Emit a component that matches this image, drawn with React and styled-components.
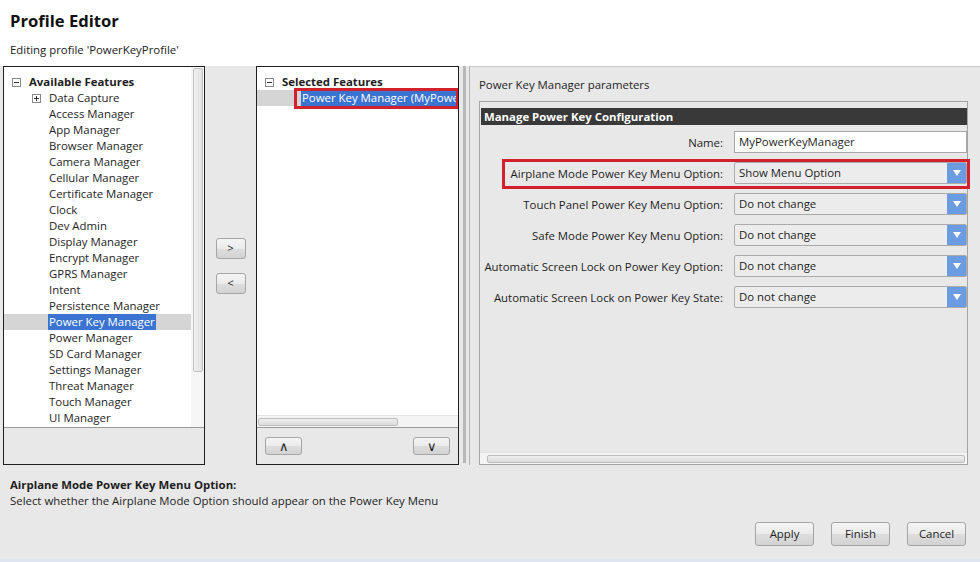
import React from 'react'
import styled, { createGlobalStyle } from 'styled-components'

const FONT = `"Open Sans", "Noto Sans", sans-serif`

const GlobalStyle = createGlobalStyle`
  * { box-sizing: border-box; }
  body {
    margin: 0;
    font-family: ${FONT};
    font-size: 11.4px;
    color: #1e1e1e;
    background: #e8e8e8;
  }
`

const Window = styled.div`
  width: 980px;
  height: 562px;
  display: flex;
  flex-direction: column;
  background: #e8e8e8;
  border-bottom: 3px solid #dde6f1;
  overflow: hidden;
`

const Header = styled.div`
  height: 66px;
  background: #fff;
  padding: 10px 10px 0;
  display: flex;
  flex-direction: column;
`

const Title = styled.div`
  font-size: 16.6px;
  font-weight: bold;
  color: #111;
  line-height: 22px;
`

const Subtitle = styled.div`
  margin-top: 10px;
  line-height: 16px;
  color: #222;
`

const Body = styled.div`
  height: 399px;
  display: flex;
  padding-left: 3px;
`

const FeaturePanel = styled.div`
  width: ${p => p.$width}px;
  height: 399px;
  border: 1px solid #1f1f1f;
  display: flex;
  flex-direction: column;
  background: #e8e8e8;
`

const TreeArea = styled.div`
  height: 361px;
  background: #fff;
  border-bottom: 1px solid #9a9a9a;
  display: flex;
  flex-direction: ${p => (p.$horizontal ? 'column' : 'row')};
`

const TreeList = styled.div`
  flex: 1;
  padding-top: 7px;
  overflow: hidden;
`

const Row = styled.div`
  position: relative;
  height: 16px;
  line-height: 16px;
  display: flex;
  align-items: center;
  white-space: nowrap;
  padding-left: ${p => p.$indent}px;
  background: ${p => (p.$active ? '#d5d5d5' : 'transparent')};
`

const Expander = styled.span`
  width: 9px;
  height: 9px;
  border: 1px solid #8a8a8a;
  position: relative;
  margin-right: 8px;
  flex-shrink: 0;
  background: #fff;
  &::before {
    content: '';
    position: absolute;
    left: 1px;
    right: 1px;
    top: 3px;
    height: 1px;
    background: #333;
  }
  &::after {
    content: '';
    display: ${p => (p.$open ? 'none' : 'block')};
    position: absolute;
    top: 1px;
    bottom: 1px;
    left: 3px;
    width: 1px;
    background: #333;
  }
`

const Label = styled.span`
  font-weight: ${p => (p.$bold ? 'bold' : 'normal')};
  color: ${p => (p.$selected ? '#fff' : '#1e1e1e')};
  background: ${p => (p.$selected ? '#3a73d0' : 'transparent')};
  padding: 0 1px;
  margin-left: -1px;
`

const VScroll = styled.div`
  width: 13px;
  padding: 1px 1px 0 2px;
  background: #f6f6f6;
`

const VThumb = styled.div`
  height: 304px;
  border: 1px solid #c2c2c2;
  border-radius: 2px;
  background: linear-gradient(to right, #f0f0f0, #e2e2e2);
`

const HScroll = styled.div`
  height: 12px;
  padding: 2px 0 1px ${p => p.$inset}px;
  background: #f4f4f4;
  border-top: 1px solid #e4e4e4;
`

const HThumb = styled.div`
  width: ${p => p.$width}px;
  height: 100%;
  border: 1px solid #bdbdbd;
  border-radius: 2px;
  background: linear-gradient(#eeeeee, #dcdcdc);
`

const PanelFooter = styled.div`
  flex: 1;
  display: flex;
  align-items: center;
  justify-content: space-between;
  padding: 0 8px;
`

const Button = styled.button`
  font-family: ${FONT};
  font-size: ${p => p.$fs || 11.4}px;
  color: #1e1e1e;
  width: ${p => p.$w}px;
  height: ${p => p.$h}px;
  padding: 0;
  border: 1px solid #a5a5a5;
  border-radius: 3px;
  background: linear-gradient(#f4f4f4 0%, #ebebeb 50%, #dddddd 51%, #d3d3d3 100%);
  line-height: 1;
`

const MoveColumn = styled.div`
  width: 51px;
  display: flex;
  flex-direction: column;
  align-items: center;
  justify-content: center;
  gap: 14px;
`

const Sash = styled.div`
  width: 10px;
  padding: 0 3px 2px 4px;
  display: flex;
`

const Dots = styled.div`
  flex: 1;
  background-image: radial-gradient(circle, #9c9c9c 0.6px, transparent 0.9px);
  background-size: 2px 2px;
`

const ParamPanel = styled.div`
  flex: 1;
  border-left: 1px solid #b4b4b4;
  border-top: 1px solid #c8c8c8;
  padding: 10px 12px 0 9px;
  display: flex;
  flex-direction: column;
`

const PanelCaption = styled.div`
  line-height: 16px;
  margin-bottom: 8px;
`

const Group = styled.div`
  width: 489px;
  height: 364px;
  border: 1px solid #a4a4a4;
  padding-top: 6px;
  display: flex;
  flex-direction: column;
`

const GroupTitle = styled.div`
  margin: 0 0 0 1px;
  height: 17px;
  line-height: 17px;
  padding-left: 3px;
  background: #393939;
  color: #fff;
  font-weight: bold;
`

const Fields = styled.div`
  flex: 1;
  display: flex;
  flex-direction: column;
  gap: 9px;
  padding: 6px 0 0 1px;
`

const FieldRow = styled.div`
  position: relative;
  display: flex;
  align-items: center;
  gap: 11px;
  height: 22px;
`

const FieldLabel = styled.div`
  flex: 1;
  text-align: right;
  white-space: nowrap;
`

const TextBox = styled.div`
  width: 233px;
  height: 22px;
  border: 1px solid #a8a8a8;
  background: #fff;
  padding-left: 4px;
  line-height: 20px;
`

const Select = styled.div`
  width: 233px;
  height: 22px;
  border: 1px solid #aaaaaa;
  border-radius: 2px;
  background: #ececec;
  display: flex;
`

const SelectValue = styled.div`
  flex: 1;
  padding-left: 4px;
  line-height: 20px;
`

const SelectArrow = styled.div`
  width: 19px;
  background: #6b9be0;
  display: flex;
  align-items: center;
  justify-content: center;
  &::after {
    content: '';
    border-left: 4px solid transparent;
    border-right: 4px solid transparent;
    border-top: 6px solid #fff;
  }
`

const Highlight = styled.div`
  position: absolute;
  border: 3px solid #d2202d;
  pointer-events: none;
  left: ${p => p.$l}px;
  top: ${p => p.$t}px;
  right: ${p => p.$r}px;
  bottom: ${p => p.$b}px;
`

const Footer = styled.div`
  flex: 1;
  display: flex;
  flex-direction: column;
  padding: 12px 14px 13px 10px;
`

const HelpTitle = styled.div`
  font-weight: bold;
  line-height: 16px;
`

const HelpText = styled.div`
  line-height: 16px;
`

const ActionRow = styled.div`
  margin-top: auto;
  display: flex;
  justify-content: flex-end;
  gap: 17px;
`

const features = [
  'Access Manager', 'App Manager', 'Browser Manager', 'Camera Manager', 'Cellular Manager',
  'Certificate Manager', 'Clock', 'Dev Admin', 'Display Manager', 'Encrypt Manager',
  'GPRS Manager', 'Intent', 'Persistence Manager', 'Power Key Manager', 'Power Manager',
  'SD Card Manager', 'Settings Manager', 'Threat Manager', 'Touch Manager', 'UI Manager',
]

const params = [
  { label: 'Airplane Mode Power Key Menu Option:', value: 'Show Menu Option', marked: true },
  { label: 'Touch Panel Power Key Menu Option:', value: 'Do not change' },
  { label: 'Safe Mode Power Key Menu Option:', value: 'Do not change' },
  { label: 'Automatic Screen Lock on Power Key Option:', value: 'Do not change' },
  { label: 'Automatic Screen Lock on Power Key State:', value: 'Do not change' },
]

export default function App() {
  return (
    <>
      <GlobalStyle />
      <Window>
        <Header>
          <Title>Profile Editor</Title>
          <Subtitle>Editing profile 'PowerKeyProfile'</Subtitle>
        </Header>

        <Body>
          <FeaturePanel $width={202}>
            <TreeArea>
              <TreeList>
                <Row $indent={8}>
                  <Expander $open />
                  <Label $bold>Available Features</Label>
                </Row>
                <Row $indent={28}>
                  <Expander />
                  <Label>Data Capture</Label>
                </Row>
                {features.map(name => (
                  <Row key={name} $indent={45} $active={name === 'Power Key Manager'}>
                    <Label $selected={name === 'Power Key Manager'}>{name}</Label>
                  </Row>
                ))}
              </TreeList>
              <VScroll>
                <VThumb />
              </VScroll>
            </TreeArea>
            <PanelFooter />
          </FeaturePanel>

          <MoveColumn>
            <Button $w={30} $h={21}>&gt;</Button>
            <Button $w={30} $h={21}>&lt;</Button>
          </MoveColumn>

          <FeaturePanel $width={203}>
            <TreeArea $horizontal>
              <TreeList>
                <Row $indent={8}>
                  <Expander $open />
                  <Label $bold>Selected Features</Label>
                </Row>
                <Row $indent={45} $active>
                  <Label $selected>Power Key Manager (MyPowerKeyManager)</Label>
                  <Highlight $l={37} $t={-2} $r={-1} $b={-3} />
                </Row>
              </TreeList>
              <HScroll $inset={1}>
                <HThumb $width={140} />
              </HScroll>
            </TreeArea>
            <PanelFooter>
              <Button $w={37} $h={18} $fs={13}>∧</Button>
              <Button $w={37} $h={18} $fs={13}>∨</Button>
            </PanelFooter>
          </FeaturePanel>

          <Sash>
            <Dots />
          </Sash>

          <ParamPanel>
            <PanelCaption>Power Key Manager parameters</PanelCaption>
            <Group>
              <GroupTitle>Manage Power Key Configuration</GroupTitle>
              <Fields>
                <FieldRow>
                  <FieldLabel>Name:</FieldLabel>
                  <TextBox>MyPowerKeyManager</TextBox>
                </FieldRow>
                {params.map(p => (
                  <FieldRow key={p.label}>
                    <FieldLabel>{p.label}</FieldLabel>
                    <Select>
                      <SelectValue>{p.value}</SelectValue>
                      <SelectArrow />
                    </Select>
                    {p.marked && <Highlight $l={21} $t={-3} $r={-3} $b={-5} />}
                  </FieldRow>
                ))}
              </Fields>
              <HScroll $inset={7}>
                <HThumb $width={478} />
              </HScroll>
            </Group>
          </ParamPanel>
        </Body>

        <Footer>
          <HelpTitle>Airplane Mode Power Key Menu Option:</HelpTitle>
          <HelpText>Select whether the Airplane Mode Option should appear on the Power Key Menu</HelpText>
          <ActionRow>
            <Button $w={59} $h={24}>Apply</Button>
            <Button $w={59} $h={24}>Finish</Button>
            <Button $w={59} $h={24}>Cancel</Button>
          </ActionRow>
        </Footer>
      </Window>
    </>
  )
}
